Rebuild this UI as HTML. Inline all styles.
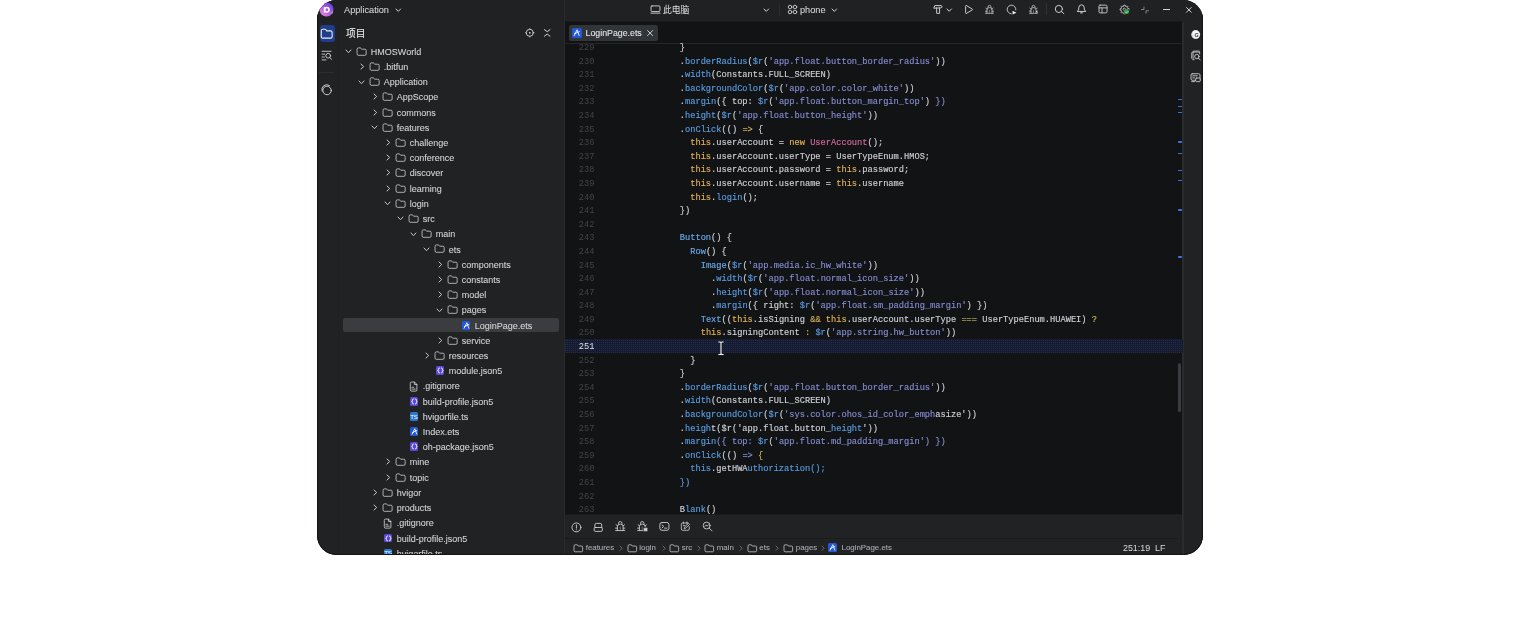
<!DOCTYPE html>
<html lang="zh"><head><meta charset="utf-8"><title>DevEco Studio</title><style>
*{box-sizing:border-box;margin:0;padding:0}
html,body{width:1520px;height:618px;background:#fff;overflow:hidden}
body{position:relative;font-family:"Liberation Sans","Noto Sans CJK SC",sans-serif;color:#d3d5d8;}
#win{position:absolute;left:317px;top:0px;width:885.6px;height:554.8px;background:#202224;border-radius:19.5px;overflow:hidden;will-change:transform}
.abs{position:absolute}
.t{position:absolute;white-space:pre;line-height:1;font-size:9.0px;transform:translateY(-50%);-webkit-text-stroke:.08px currentColor}
.code{position:absolute;white-space:pre;font-family:"Liberation Mono",monospace;font-size:8.7px;line-height:1;transform:translateY(-50%);color:#cdd0d5;-webkit-text-stroke:.15px currentColor}
.ln{position:absolute;white-space:pre;font-family:"Liberation Mono",monospace;font-size:8.7px;line-height:1;transform:translateY(-50%);color:#40444a}
svg{position:absolute;overflow:visible}
.m{color:#5a9be0} .s{color:#868bd0} .k{color:#e2b155} .p{color:#d4699e} .c{color:#6aa9ea} .o{color:#cfae58} .e{color:#a39a55}
.dot{position:absolute;height:1px;background:repeating-linear-gradient(90deg,#121416 0 1px,transparent 1px 2px)}
</style></head><body><div id="win">
<div class="abs" style="left:0;top:0;width:885.6px;height:21px;background:#1f2123"></div>
<div class="abs" style="left:0;top:21px;width:21px;height:540px;background:#202224"></div>
<div class="abs" style="left:248px;top:21px;width:618px;height:493px;background:#111315"></div>
<div class="abs" style="left:248px;top:43px;width:618px;height:1px;background:#24272a"></div>
<div class="abs" style="left:866px;top:21px;width:20px;height:540px;background:#202224"></div>
<div class="abs" style="left:248px;top:514px;width:618px;height:41px;background:#202224"></div>
<div class="dot" style="left:248px;top:514px;width:618px"></div>
<div class="dot" style="left:248px;top:538px;width:614px"></div>
<div class="abs" style="left:248px;top:21px;width:618px;height:1px;background:#1f2123"></div>
<div class="dot" style="left:248px;top:21px;width:618px"></div>
<div class="abs" style="left:247px;top:0;width:1px;height:560px;background:#27292c"></div>
<div class="abs" style="left:865.3px;top:22px;width:1.8px;height:540px;background:#292b2d"></div>
<div class="abs" style="left:21px;top:21px;width:1px;height:540px;background:#1b2021"></div>
<div class="t" style="left:27px;top:10.7px;font-size:9.2px">Application</div>
<div class="t" style="left:346px;top:10.2px;font-size:8.8px">此电脑</div>
<div class="t" style="left:483px;top:10.7px;font-size:9.2px">phone</div>
<svg style="left:79.0px;top:9.0px" width="4.6" height="2.4" viewBox="0 0 4.6 2.4"><path d="M0 0 L2.3 2.4 L4.6 0" fill="none" stroke="#cfd1d4" stroke-width="1" stroke-linecap="round" stroke-linejoin="round"/></svg>
<svg style="left:446.5px;top:8.8px" width="4.6" height="2.4" viewBox="0 0 4.6 2.4"><path d="M0 0 L2.3 2.4 L4.6 0" fill="none" stroke="#cfd1d4" stroke-width="1" stroke-linecap="round" stroke-linejoin="round"/></svg>
<svg style="left:514.7px;top:8.8px" width="4.6" height="2.4" viewBox="0 0 4.6 2.4"><path d="M0 0 L2.3 2.4 L4.6 0" fill="none" stroke="#cfd1d4" stroke-width="1" stroke-linecap="round" stroke-linejoin="round"/></svg>
<div class="abs" style="left:462px;top:4px;width:1px;height:12px;background:#2b2e31"></div>
<div class="abs" style="left:729px;top:3px;width:1px;height:12px;background:#2f3235"></div>
<svg style="left:2.3px;top:1.5px" width="15" height="15" viewBox="0 0 15 15"><defs><linearGradient id="lg" x1="0" y1="1" x2="1" y2="0"><stop offset="0" stop-color="#f49ad6"/><stop offset=".5" stop-color="#b058e6"/><stop offset="1" stop-color="#4a3be0"/></linearGradient></defs><circle cx="7.5" cy="7.5" r="7" fill="url(#lg)"/><circle cx="7.8" cy="7.8" r="2.3" fill="none" stroke="#fff" stroke-width="1.5"/><path d="M5.6 5v5.5" stroke="#fff" stroke-width="1.5" fill="none"/><path d="M11 11.5l3 0 0-3z" fill="#9a9ca0"/></svg>
<svg style="left:332.6px;top:3.8px" width="11" height="11" viewBox="0 0 16 16" stroke-width="1.35" fill="none" stroke="#cfd1d4" stroke-width="1.4" stroke-linecap="round" stroke-linejoin="round"><rect x="1.5" y="2.8" width="13" height="8.2" rx="1.3"/><path d="M1.3 13.3h13.4"/></svg>
<svg style="left:469.5px;top:4.1px" width="11" height="11" viewBox="0 0 16 16" stroke-width="1.3" fill="none" stroke="#cfd1d4" stroke-width="1.4" stroke-linecap="round" stroke-linejoin="round"><circle cx="4.4" cy="4.4" r="2.6"/><circle cx="11.6" cy="4.4" r="2.6"/><circle cx="4.4" cy="11.6" r="2.6"/><circle cx="11.6" cy="11.6" r="2.6"/></svg>
<svg style="left:614.7px;top:4.0px" width="11" height="11" viewBox="0 0 16 16"  fill="none" stroke="#cfd1d4" stroke-width="1.4" stroke-linecap="round" stroke-linejoin="round"><path d="M2.8 5.6 4 2.3h9a1.6 1.65 0 0 1 0 3.3z M6.8 5.6v8h4.2v-8"/></svg>
<svg style="left:630.4px;top:8.55px" width="4.4" height="2.3" viewBox="0 0 4.4 2.3"><path d="M0 0 L2.2 2.3 L4.4 0" fill="none" stroke="#cfd1d4" stroke-width="1" stroke-linecap="round" stroke-linejoin="round"/></svg>
<svg style="left:645.8px;top:4.0px" width="11" height="11" viewBox="0 0 16 16"  fill="none" stroke="#cfd1d4" stroke-width="1.4" stroke-linecap="round" stroke-linejoin="round"><path d="M3.8 2.8a.7.7 0 0 1 1.1-.6l8.6 5.2a.7.7 0 0 1 0 1.2l-8.6 5.2a.7.7 0 0 1-1.1-.6z"/></svg>
<svg style="left:667.4px;top:4.0px" width="11" height="11" viewBox="0 0 16 16"  fill="none" stroke="#cfd1d4" stroke-width="1.4" stroke-linecap="round" stroke-linejoin="round"><g stroke-width="1.1"><path d="M5.8 5.2V4.3a2.2 2.4 0 0 1 4.4 0v.9"/><path d="M4.3 13.4V8.8a3.7 3.6 0 0 1 7.4 0v4.6"/><path d="M2.2 13.5h11.6 M4.4 7.5 2.6 6.1 M11.6 7.5 13.4 6.1 M4.3 10.4H2 M11.7 10.4H14"/><path d="M8 9v3" stroke-opacity=".6"/></g></svg>
<svg style="left:689.3px;top:4.0px" width="11" height="11" viewBox="0 0 16 16"  fill="none" stroke="#cfd1d4" stroke-width="1.4" stroke-linecap="round" stroke-linejoin="round"><path d="M14.3 8.6A6.3 6.3 0 1 0 7.6 14.3" stroke-width="1.3"/><path d="M9.5 9.8 15.2 12.6 9.5 15.4Z" fill="#eceef0" stroke="none"/></svg>
<svg style="left:710.9px;top:4.0px" width="11" height="11" viewBox="0 0 16 16"  fill="none" stroke="#cfd1d4" stroke-width="1.4" stroke-linecap="round" stroke-linejoin="round"><g stroke-width="1.1"><path d="M5.8 5.2V4.3a2.2 2.4 0 0 1 4.4 0v.9"/><path d="M4.3 13.4V8.8a3.7 3.6 0 0 1 7.4 0v4.6"/><path d="M2.2 13.5h11.6 M4.4 7.5 2.6 6.1 M11.6 7.5 13.4 6.1 M4.3 10.4H2 M11.7 10.4H14"/><path d="M8 9v3" stroke-opacity=".6"/></g><path d="M11.8 8.5 15.2 13.3 11.3 12.3Z" fill="#e8eaec" stroke="#1f2123" stroke-width=".6"/></svg>
<svg style="left:736.8px;top:4.0px" width="11" height="11" viewBox="0 0 16 16"  fill="none" stroke="#cfd1d4" stroke-width="1.4" stroke-linecap="round" stroke-linejoin="round"><circle cx="7.1" cy="7.2" r="5.2"/><path d="M10.9 11 14.3 14.1"/></svg>
<svg style="left:758.7px;top:3.2px" width="11" height="11" viewBox="0 0 16 16"  fill="none" stroke="#cfd1d4" stroke-width="1.4" stroke-linecap="round" stroke-linejoin="round"><path d="M2.2 12c1.5-1 1.8-2.4 1.8-5a4 4.3 0 0 1 8 0c0 2.6 .3 4 1.8 5z M6.5 14.3h3"/></svg>
<svg style="left:780.7px;top:4.4px" width="10" height="10" viewBox="0 0 16 16"  fill="none" stroke="#cfd1d4" stroke-width="1.4" stroke-linecap="round" stroke-linejoin="round"><rect x="1.6" y="1.8" width="12.8" height="12.4" rx="1.8"/><path d="M1.6 6.2h12.8 M6.4 6.2v8"/></svg>
<svg style="left:801.8px;top:3.5px" width="11" height="11" viewBox="0 0 16 16"  fill="none" stroke="#cfd1d4" stroke-width="1.4" stroke-linecap="round" stroke-linejoin="round"><path d="M14.42 6.98 L14.42 9.02 L12.76 9.14 L12.18 10.56 L13.26 11.82 L11.82 13.26 L10.56 12.18 L9.14 12.76 L9.02 14.42 L6.98 14.42 L6.86 12.76 L5.44 12.18 L4.18 13.26 L2.74 11.82 L3.82 10.56 L3.24 9.14 L1.58 9.02 L1.58 6.98 L3.24 6.86 L3.82 5.44 L2.74 4.18 L4.18 2.74 L5.44 3.82 L6.86 3.24 L6.98 1.58 L9.02 1.58 L9.14 3.24 L10.56 3.82 L11.82 2.74 L13.26 4.18 L12.18 5.44 L12.76 6.86Z" stroke-width="1.2"/><circle cx="8" cy="8" r="1.9" stroke-width="1.2"/></svg>
<div class="abs" style="left:807.4px;top:9.3px;width:5px;height:5px;border-radius:50%;background:#3fa24b;box-shadow:0 0 0 .5px #1f2123"></div>
<svg style="left:808.3px;top:10.5px" width="3.2" height="2.6" viewBox="0 0 3.2 2.6"><path d="M.3 1.3 1.2 2.2 2.9.4" fill="none" stroke="#e6f5e8" stroke-width=".6"/></svg>
<svg style="left:824.0px;top:5.7px" width="8" height="8" viewBox="0 0 16 16" stroke-width="1.3" stroke="#b4b6ba" fill="none" stroke="#cfd1d4" stroke-width="1.4" stroke-linecap="round" stroke-linejoin="round"><path d="M1 7h5V2 M15 9.5h-5v5"/></svg>
<div class="abs" style="left:846px;top:9.2px;width:7.2px;height:1px;background:#cfd1d4"></div>
<svg style="left:868.5px;top:6.6px" width="5.8" height="5.8" viewBox="0 0 16 16" stroke-width="2.5" stroke="#e4e6e9" fill="none" stroke="#cfd1d4" stroke-width="1.4" stroke-linecap="round" stroke-linejoin="round"><path d="M1.5 1.5 14.5 14.5 M14.5 1.5 1.5 14.5"/></svg>
<div class="abs" style="left:3.3px;top:24.9px;width:14.8px;height:17.1px;border-radius:3px;background:#1f3d8c"></div>
<svg style="left:3.2px;top:27.1px" width="13.4" height="13.4" viewBox="0 0 16 16" stroke="#eef0f3" stroke-width="1.3" fill="none" stroke="#cfd1d4" stroke-width="1.4" stroke-linecap="round" stroke-linejoin="round"><path d="M1.5 4.4a1.7 1.7 0 0 1 1.7-1.7h2.8q.7 0 1.1.6l.9 1.3H12.8a1.7 1.7 0 0 1 1.7 1.7v5.3a1.7 1.7 0 0 1-1.7 1.7H3.2a1.7 1.7 0 0 1-1.7-1.7z"/></svg>
<svg style="left:3.65px;top:49.95px" width="11.5" height="11.5" viewBox="0 0 16 16" stroke-width="1.25" fill="none" stroke="#cfd1d4" stroke-width="1.4" stroke-linecap="round" stroke-linejoin="round"><path d="M1.5 1.8h12.5 M1.5 5.8h3.6 M1.5 9.8h3 M1.5 13.8h5.5"/><circle cx="10" cy="8" r="3.3"/><path d="M12.5 10.6 14.5 13"/></svg>
<div class="abs" style="left:2px;top:72.3px;width:15px;height:1px;background:#2c2f32"></div>
<svg style="left:2.9px;top:82.8px" width="13" height="13" viewBox="0 0 16 16" stroke-width="1.2" fill="none" stroke="#cfd1d4" stroke-width="1.4" stroke-linecap="round" stroke-linejoin="round"><circle cx="8.7" cy="9.2" r="5.2"/><path d="M2.6 10A6 6 0 0 1 11.5 3"/></svg>
<div class="t" style="left:29px;top:34.2px;font-size:9.7px;color:#eceef0">项目</div>
<svg style="left:207.7px;top:28.0px" width="9.6" height="9.6" viewBox="0 0 16 16" stroke-width="1.5" fill="none" stroke="#cfd1d4" stroke-width="1.4" stroke-linecap="round" stroke-linejoin="round"><circle cx="8" cy="8" r="5.9"/><circle cx="8" cy="8" r="1.5" fill="#cfd1d4" stroke="none"/><path d="M8 .8v1.6 M8 13.6v1.6 M.8 8h1.6 M13.6 8h1.6" stroke-width="1.2"/></svg>
<svg style="left:226.8px;top:29.1px" width="6.4" height="7.8" viewBox="0 0 6.4 7.8" fill="none" stroke="#cfd1d4" stroke-width="1" stroke-linecap="round" stroke-linejoin="round"><path d="M.4 .6 3.2 2.7 6 .6 M.4 7.2 3.2 5.1 6 7.2"/></svg>
<svg style="left:29.2px;top:50.15px" width="5" height="2.7" viewBox="0 0 5 2.7"><path d="M0 0 L2.5 2.7 L5 0" fill="none" stroke="#c6c8cb" stroke-width="1" stroke-linecap="round" stroke-linejoin="round"/></svg>
<svg style="left:38.9px;top:45.75px" width="11.2" height="11.2" viewBox="0 0 16 16" stroke-width="1.15" fill="none" stroke="#cfd1d4" stroke-width="1.4" stroke-linecap="round" stroke-linejoin="round"><path d="M1.5 4.4a1.7 1.7 0 0 1 1.7-1.7h2.8q.7 0 1.1.6l.9 1.3H12.8a1.7 1.7 0 0 1 1.7 1.7v5.3a1.7 1.7 0 0 1-1.7 1.7H3.2a1.7 1.7 0 0 1-1.7-1.7z"/></svg>
<div class="t" style="left:53.8px;top:51.8px">HMOSWorld</div>
<svg style="left:44.25px;top:64.01px" width="2.7" height="5" viewBox="0 0 2.7 5"><path d="M0 0 L2.7 2.5 L0 5" fill="none" stroke="#c6c8cb" stroke-width="1" stroke-linecap="round" stroke-linejoin="round"/></svg>
<svg style="left:51.9px;top:60.96px" width="11.2" height="11.2" viewBox="0 0 16 16" stroke-width="1.15" fill="none" stroke="#cfd1d4" stroke-width="1.4" stroke-linecap="round" stroke-linejoin="round"><path d="M1.5 4.4a1.7 1.7 0 0 1 1.7-1.7h2.8q.7 0 1.1.6l.9 1.3H12.8a1.7 1.7 0 0 1 1.7 1.7v5.3a1.7 1.7 0 0 1-1.7 1.7H3.2a1.7 1.7 0 0 1-1.7-1.7z"/></svg>
<div class="t" style="left:66.8px;top:67.01px">.bitfun</div>
<svg style="left:42.2px;top:80.57px" width="5" height="2.7" viewBox="0 0 5 2.7"><path d="M0 0 L2.5 2.7 L5 0" fill="none" stroke="#c6c8cb" stroke-width="1" stroke-linecap="round" stroke-linejoin="round"/></svg>
<svg style="left:51.9px;top:76.17px" width="11.2" height="11.2" viewBox="0 0 16 16" stroke-width="1.15" fill="none" stroke="#cfd1d4" stroke-width="1.4" stroke-linecap="round" stroke-linejoin="round"><path d="M1.5 4.4a1.7 1.7 0 0 1 1.7-1.7h2.8q.7 0 1.1.6l.9 1.3H12.8a1.7 1.7 0 0 1 1.7 1.7v5.3a1.7 1.7 0 0 1-1.7 1.7H3.2a1.7 1.7 0 0 1-1.7-1.7z"/></svg>
<div class="t" style="left:66.8px;top:82.22px">Application</div>
<svg style="left:57.25px;top:94.43px" width="2.7" height="5" viewBox="0 0 2.7 5"><path d="M0 0 L2.7 2.5 L0 5" fill="none" stroke="#c6c8cb" stroke-width="1" stroke-linecap="round" stroke-linejoin="round"/></svg>
<svg style="left:64.9px;top:91.38px" width="11.2" height="11.2" viewBox="0 0 16 16" stroke-width="1.15" fill="none" stroke="#cfd1d4" stroke-width="1.4" stroke-linecap="round" stroke-linejoin="round"><path d="M1.5 4.4a1.7 1.7 0 0 1 1.7-1.7h2.8q.7 0 1.1.6l.9 1.3H12.8a1.7 1.7 0 0 1 1.7 1.7v5.3a1.7 1.7 0 0 1-1.7 1.7H3.2a1.7 1.7 0 0 1-1.7-1.7z"/></svg>
<div class="t" style="left:79.8px;top:97.43px">AppScope</div>
<svg style="left:57.25px;top:109.64px" width="2.7" height="5" viewBox="0 0 2.7 5"><path d="M0 0 L2.7 2.5 L0 5" fill="none" stroke="#c6c8cb" stroke-width="1" stroke-linecap="round" stroke-linejoin="round"/></svg>
<svg style="left:64.9px;top:106.59px" width="11.2" height="11.2" viewBox="0 0 16 16" stroke-width="1.15" fill="none" stroke="#cfd1d4" stroke-width="1.4" stroke-linecap="round" stroke-linejoin="round"><path d="M1.5 4.4a1.7 1.7 0 0 1 1.7-1.7h2.8q.7 0 1.1.6l.9 1.3H12.8a1.7 1.7 0 0 1 1.7 1.7v5.3a1.7 1.7 0 0 1-1.7 1.7H3.2a1.7 1.7 0 0 1-1.7-1.7z"/></svg>
<div class="t" style="left:79.8px;top:112.64px">commons</div>
<svg style="left:55.2px;top:126.2px" width="5" height="2.7" viewBox="0 0 5 2.7"><path d="M0 0 L2.5 2.7 L5 0" fill="none" stroke="#c6c8cb" stroke-width="1" stroke-linecap="round" stroke-linejoin="round"/></svg>
<svg style="left:64.9px;top:121.8px" width="11.2" height="11.2" viewBox="0 0 16 16" stroke-width="1.15" fill="none" stroke="#cfd1d4" stroke-width="1.4" stroke-linecap="round" stroke-linejoin="round"><path d="M1.5 4.4a1.7 1.7 0 0 1 1.7-1.7h2.8q.7 0 1.1.6l.9 1.3H12.8a1.7 1.7 0 0 1 1.7 1.7v5.3a1.7 1.7 0 0 1-1.7 1.7H3.2a1.7 1.7 0 0 1-1.7-1.7z"/></svg>
<div class="t" style="left:79.8px;top:127.85px">features</div>
<svg style="left:70.25px;top:140.06px" width="2.7" height="5" viewBox="0 0 2.7 5"><path d="M0 0 L2.7 2.5 L0 5" fill="none" stroke="#c6c8cb" stroke-width="1" stroke-linecap="round" stroke-linejoin="round"/></svg>
<svg style="left:77.9px;top:137.01px" width="11.2" height="11.2" viewBox="0 0 16 16" stroke-width="1.15" fill="none" stroke="#cfd1d4" stroke-width="1.4" stroke-linecap="round" stroke-linejoin="round"><path d="M1.5 4.4a1.7 1.7 0 0 1 1.7-1.7h2.8q.7 0 1.1.6l.9 1.3H12.8a1.7 1.7 0 0 1 1.7 1.7v5.3a1.7 1.7 0 0 1-1.7 1.7H3.2a1.7 1.7 0 0 1-1.7-1.7z"/></svg>
<div class="t" style="left:92.8px;top:143.06px">challenge</div>
<svg style="left:70.25px;top:155.27px" width="2.7" height="5" viewBox="0 0 2.7 5"><path d="M0 0 L2.7 2.5 L0 5" fill="none" stroke="#c6c8cb" stroke-width="1" stroke-linecap="round" stroke-linejoin="round"/></svg>
<svg style="left:77.9px;top:152.22px" width="11.2" height="11.2" viewBox="0 0 16 16" stroke-width="1.15" fill="none" stroke="#cfd1d4" stroke-width="1.4" stroke-linecap="round" stroke-linejoin="round"><path d="M1.5 4.4a1.7 1.7 0 0 1 1.7-1.7h2.8q.7 0 1.1.6l.9 1.3H12.8a1.7 1.7 0 0 1 1.7 1.7v5.3a1.7 1.7 0 0 1-1.7 1.7H3.2a1.7 1.7 0 0 1-1.7-1.7z"/></svg>
<div class="t" style="left:92.8px;top:158.27px">conference</div>
<svg style="left:70.25px;top:170.48px" width="2.7" height="5" viewBox="0 0 2.7 5"><path d="M0 0 L2.7 2.5 L0 5" fill="none" stroke="#c6c8cb" stroke-width="1" stroke-linecap="round" stroke-linejoin="round"/></svg>
<svg style="left:77.9px;top:167.43px" width="11.2" height="11.2" viewBox="0 0 16 16" stroke-width="1.15" fill="none" stroke="#cfd1d4" stroke-width="1.4" stroke-linecap="round" stroke-linejoin="round"><path d="M1.5 4.4a1.7 1.7 0 0 1 1.7-1.7h2.8q.7 0 1.1.6l.9 1.3H12.8a1.7 1.7 0 0 1 1.7 1.7v5.3a1.7 1.7 0 0 1-1.7 1.7H3.2a1.7 1.7 0 0 1-1.7-1.7z"/></svg>
<div class="t" style="left:92.8px;top:173.48px">discover</div>
<svg style="left:70.25px;top:185.69px" width="2.7" height="5" viewBox="0 0 2.7 5"><path d="M0 0 L2.7 2.5 L0 5" fill="none" stroke="#c6c8cb" stroke-width="1" stroke-linecap="round" stroke-linejoin="round"/></svg>
<svg style="left:77.9px;top:182.64px" width="11.2" height="11.2" viewBox="0 0 16 16" stroke-width="1.15" fill="none" stroke="#cfd1d4" stroke-width="1.4" stroke-linecap="round" stroke-linejoin="round"><path d="M1.5 4.4a1.7 1.7 0 0 1 1.7-1.7h2.8q.7 0 1.1.6l.9 1.3H12.8a1.7 1.7 0 0 1 1.7 1.7v5.3a1.7 1.7 0 0 1-1.7 1.7H3.2a1.7 1.7 0 0 1-1.7-1.7z"/></svg>
<div class="t" style="left:92.8px;top:188.69px">learning</div>
<svg style="left:68.2px;top:202.25px" width="5" height="2.7" viewBox="0 0 5 2.7"><path d="M0 0 L2.5 2.7 L5 0" fill="none" stroke="#c6c8cb" stroke-width="1" stroke-linecap="round" stroke-linejoin="round"/></svg>
<svg style="left:77.9px;top:197.85px" width="11.2" height="11.2" viewBox="0 0 16 16" stroke-width="1.15" fill="none" stroke="#cfd1d4" stroke-width="1.4" stroke-linecap="round" stroke-linejoin="round"><path d="M1.5 4.4a1.7 1.7 0 0 1 1.7-1.7h2.8q.7 0 1.1.6l.9 1.3H12.8a1.7 1.7 0 0 1 1.7 1.7v5.3a1.7 1.7 0 0 1-1.7 1.7H3.2a1.7 1.7 0 0 1-1.7-1.7z"/></svg>
<div class="t" style="left:92.8px;top:203.9px">login</div>
<svg style="left:81.2px;top:217.46px" width="5" height="2.7" viewBox="0 0 5 2.7"><path d="M0 0 L2.5 2.7 L5 0" fill="none" stroke="#c6c8cb" stroke-width="1" stroke-linecap="round" stroke-linejoin="round"/></svg>
<svg style="left:90.9px;top:213.06px" width="11.2" height="11.2" viewBox="0 0 16 16" stroke-width="1.15" fill="none" stroke="#cfd1d4" stroke-width="1.4" stroke-linecap="round" stroke-linejoin="round"><path d="M1.5 4.4a1.7 1.7 0 0 1 1.7-1.7h2.8q.7 0 1.1.6l.9 1.3H12.8a1.7 1.7 0 0 1 1.7 1.7v5.3a1.7 1.7 0 0 1-1.7 1.7H3.2a1.7 1.7 0 0 1-1.7-1.7z"/></svg>
<div class="t" style="left:105.8px;top:219.11px">src</div>
<svg style="left:94.2px;top:232.67px" width="5" height="2.7" viewBox="0 0 5 2.7"><path d="M0 0 L2.5 2.7 L5 0" fill="none" stroke="#c6c8cb" stroke-width="1" stroke-linecap="round" stroke-linejoin="round"/></svg>
<svg style="left:103.9px;top:228.27px" width="11.2" height="11.2" viewBox="0 0 16 16" stroke-width="1.15" fill="none" stroke="#cfd1d4" stroke-width="1.4" stroke-linecap="round" stroke-linejoin="round"><path d="M1.5 4.4a1.7 1.7 0 0 1 1.7-1.7h2.8q.7 0 1.1.6l.9 1.3H12.8a1.7 1.7 0 0 1 1.7 1.7v5.3a1.7 1.7 0 0 1-1.7 1.7H3.2a1.7 1.7 0 0 1-1.7-1.7z"/></svg>
<div class="t" style="left:118.8px;top:234.32px">main</div>
<svg style="left:107.2px;top:247.88px" width="5" height="2.7" viewBox="0 0 5 2.7"><path d="M0 0 L2.5 2.7 L5 0" fill="none" stroke="#c6c8cb" stroke-width="1" stroke-linecap="round" stroke-linejoin="round"/></svg>
<svg style="left:116.9px;top:243.48px" width="11.2" height="11.2" viewBox="0 0 16 16" stroke-width="1.15" fill="none" stroke="#cfd1d4" stroke-width="1.4" stroke-linecap="round" stroke-linejoin="round"><path d="M1.5 4.4a1.7 1.7 0 0 1 1.7-1.7h2.8q.7 0 1.1.6l.9 1.3H12.8a1.7 1.7 0 0 1 1.7 1.7v5.3a1.7 1.7 0 0 1-1.7 1.7H3.2a1.7 1.7 0 0 1-1.7-1.7z"/></svg>
<div class="t" style="left:131.8px;top:249.53px">ets</div>
<svg style="left:122.25px;top:261.74px" width="2.7" height="5" viewBox="0 0 2.7 5"><path d="M0 0 L2.7 2.5 L0 5" fill="none" stroke="#c6c8cb" stroke-width="1" stroke-linecap="round" stroke-linejoin="round"/></svg>
<svg style="left:129.9px;top:258.69px" width="11.2" height="11.2" viewBox="0 0 16 16" stroke-width="1.15" fill="none" stroke="#cfd1d4" stroke-width="1.4" stroke-linecap="round" stroke-linejoin="round"><path d="M1.5 4.4a1.7 1.7 0 0 1 1.7-1.7h2.8q.7 0 1.1.6l.9 1.3H12.8a1.7 1.7 0 0 1 1.7 1.7v5.3a1.7 1.7 0 0 1-1.7 1.7H3.2a1.7 1.7 0 0 1-1.7-1.7z"/></svg>
<div class="t" style="left:144.8px;top:264.74px">components</div>
<svg style="left:122.25px;top:276.95px" width="2.7" height="5" viewBox="0 0 2.7 5"><path d="M0 0 L2.7 2.5 L0 5" fill="none" stroke="#c6c8cb" stroke-width="1" stroke-linecap="round" stroke-linejoin="round"/></svg>
<svg style="left:129.9px;top:273.9px" width="11.2" height="11.2" viewBox="0 0 16 16" stroke-width="1.15" fill="none" stroke="#cfd1d4" stroke-width="1.4" stroke-linecap="round" stroke-linejoin="round"><path d="M1.5 4.4a1.7 1.7 0 0 1 1.7-1.7h2.8q.7 0 1.1.6l.9 1.3H12.8a1.7 1.7 0 0 1 1.7 1.7v5.3a1.7 1.7 0 0 1-1.7 1.7H3.2a1.7 1.7 0 0 1-1.7-1.7z"/></svg>
<div class="t" style="left:144.8px;top:279.95px">constants</div>
<svg style="left:122.25px;top:292.16px" width="2.7" height="5" viewBox="0 0 2.7 5"><path d="M0 0 L2.7 2.5 L0 5" fill="none" stroke="#c6c8cb" stroke-width="1" stroke-linecap="round" stroke-linejoin="round"/></svg>
<svg style="left:129.9px;top:289.11px" width="11.2" height="11.2" viewBox="0 0 16 16" stroke-width="1.15" fill="none" stroke="#cfd1d4" stroke-width="1.4" stroke-linecap="round" stroke-linejoin="round"><path d="M1.5 4.4a1.7 1.7 0 0 1 1.7-1.7h2.8q.7 0 1.1.6l.9 1.3H12.8a1.7 1.7 0 0 1 1.7 1.7v5.3a1.7 1.7 0 0 1-1.7 1.7H3.2a1.7 1.7 0 0 1-1.7-1.7z"/></svg>
<div class="t" style="left:144.8px;top:295.16px">model</div>
<svg style="left:120.2px;top:308.72px" width="5" height="2.7" viewBox="0 0 5 2.7"><path d="M0 0 L2.5 2.7 L5 0" fill="none" stroke="#c6c8cb" stroke-width="1" stroke-linecap="round" stroke-linejoin="round"/></svg>
<svg style="left:129.9px;top:304.32px" width="11.2" height="11.2" viewBox="0 0 16 16" stroke-width="1.15" fill="none" stroke="#cfd1d4" stroke-width="1.4" stroke-linecap="round" stroke-linejoin="round"><path d="M1.5 4.4a1.7 1.7 0 0 1 1.7-1.7h2.8q.7 0 1.1.6l.9 1.3H12.8a1.7 1.7 0 0 1 1.7 1.7v5.3a1.7 1.7 0 0 1-1.7 1.7H3.2a1.7 1.7 0 0 1-1.7-1.7z"/></svg>
<div class="t" style="left:144.8px;top:310.37px">pages</div>
<div class="abs" style="left:26px;top:317.68px;width:216px;height:14.8px;border-radius:2.5px;background:#3a3c3f"></div>
<div class="abs" style="left:144.55px;top:320.63px;width:8.9px;height:8.9px;border-radius:1.6px;background:#2257d8"></div><svg style="left:144.55px;top:320.63px" width="8.9" height="8.9" viewBox="0 0 10 10" fill="none" stroke="#fff" stroke-width=".95" stroke-linecap="round" stroke-linejoin="round"><path d="M2.4 8.1 5.4 1.9 7.7 8.1 M2.6 6.3 7.9 3.9"/></svg>
<div class="t" style="left:157.8px;top:325.58px">LoginPage.ets</div>
<svg style="left:122.25px;top:337.79px" width="2.7" height="5" viewBox="0 0 2.7 5"><path d="M0 0 L2.7 2.5 L0 5" fill="none" stroke="#c6c8cb" stroke-width="1" stroke-linecap="round" stroke-linejoin="round"/></svg>
<svg style="left:129.9px;top:334.74px" width="11.2" height="11.2" viewBox="0 0 16 16" stroke-width="1.15" fill="none" stroke="#cfd1d4" stroke-width="1.4" stroke-linecap="round" stroke-linejoin="round"><path d="M1.5 4.4a1.7 1.7 0 0 1 1.7-1.7h2.8q.7 0 1.1.6l.9 1.3H12.8a1.7 1.7 0 0 1 1.7 1.7v5.3a1.7 1.7 0 0 1-1.7 1.7H3.2a1.7 1.7 0 0 1-1.7-1.7z"/></svg>
<div class="t" style="left:144.8px;top:340.79px">service</div>
<svg style="left:109.25px;top:353.0px" width="2.7" height="5" viewBox="0 0 2.7 5"><path d="M0 0 L2.7 2.5 L0 5" fill="none" stroke="#c6c8cb" stroke-width="1" stroke-linecap="round" stroke-linejoin="round"/></svg>
<svg style="left:116.9px;top:349.95px" width="11.2" height="11.2" viewBox="0 0 16 16" stroke-width="1.15" fill="none" stroke="#cfd1d4" stroke-width="1.4" stroke-linecap="round" stroke-linejoin="round"><path d="M1.5 4.4a1.7 1.7 0 0 1 1.7-1.7h2.8q.7 0 1.1.6l.9 1.3H12.8a1.7 1.7 0 0 1 1.7 1.7v5.3a1.7 1.7 0 0 1-1.7 1.7H3.2a1.7 1.7 0 0 1-1.7-1.7z"/></svg>
<div class="t" style="left:131.8px;top:356.0px">resources</div>
<div class="abs" style="left:118.55px;top:366.26px;width:8.9px;height:8.9px;border-radius:1.6px;background:#5a48d8"></div><svg style="left:118.55px;top:366.26px" width="8.9" height="8.9" viewBox="0 0 10 10" fill="none" stroke="#fff" stroke-width="1" stroke-linecap="round" stroke-linejoin="round"><path d="M3.9 2.2q-1.2 0-1.2 1.2v.8q0 .8-.8.8q.8 0 .8.8v.8q0 1.2 1.2 1.2 M6.1 2.2q1.2 0 1.2 1.2v.8q0 .8.8.8q-.8 0-.8.8v.8q0 1.2-1.2 1.2"/></svg>
<div class="t" style="left:131.8px;top:371.21px">module.json5</div>
<svg style="left:91.2px;top:380.62px" width="11.2" height="11.2" viewBox="0 0 16 16" stroke-width="1.2" fill="none" stroke="#cfd1d4" stroke-width="1.4" stroke-linecap="round" stroke-linejoin="round"><path d="M3.3 3a1.5 1.5 0 0 1 1.5-1.5h4.5l3.4 3.4v8.1a1.5 1.5 0 0 1-1.5 1.5h-6.4a1.5 1.5 0 0 1-1.5-1.5z M9.2 1.7v3.3h3.3 M5.6 9h2.6 M5.6 11.6h4.8"/></svg>
<div class="t" style="left:105.8px;top:386.42px">.gitignore</div>
<div class="abs" style="left:92.55px;top:396.68px;width:8.9px;height:8.9px;border-radius:1.6px;background:#5a48d8"></div><svg style="left:92.55px;top:396.68px" width="8.9" height="8.9" viewBox="0 0 10 10" fill="none" stroke="#fff" stroke-width="1" stroke-linecap="round" stroke-linejoin="round"><path d="M3.9 2.2q-1.2 0-1.2 1.2v.8q0 .8-.8.8q.8 0 .8.8v.8q0 1.2 1.2 1.2 M6.1 2.2q1.2 0 1.2 1.2v.8q0 .8.8.8q-.8 0-.8.8v.8q0 1.2-1.2 1.2"/></svg>
<div class="t" style="left:105.8px;top:401.63px">build-profile.json5</div>
<div class="abs" style="left:92.55px;top:411.89px;width:8.9px;height:8.9px;border-radius:1.6px;background:#2a78d2"></div><div class="t" style="left:92.55px;top:416.53999999999996px;width:8.9px;text-align:center;font-size:6.2px;font-weight:400;color:#fff;letter-spacing:-.3px;-webkit-text-stroke:0">TS</div>
<div class="t" style="left:105.8px;top:416.84px">hvigorfile.ts</div>
<div class="abs" style="left:92.55px;top:427.1px;width:8.9px;height:8.9px;border-radius:1.6px;background:#2257d8"></div><svg style="left:92.55px;top:427.1px" width="8.9" height="8.9" viewBox="0 0 10 10" fill="none" stroke="#fff" stroke-width=".95" stroke-linecap="round" stroke-linejoin="round"><path d="M2.4 8.1 5.4 1.9 7.7 8.1 M2.6 6.3 7.9 3.9"/></svg>
<div class="t" style="left:105.8px;top:432.05px">Index.ets</div>
<div class="abs" style="left:92.55px;top:442.31px;width:8.9px;height:8.9px;border-radius:1.6px;background:#5a48d8"></div><svg style="left:92.55px;top:442.31px" width="8.9" height="8.9" viewBox="0 0 10 10" fill="none" stroke="#fff" stroke-width="1" stroke-linecap="round" stroke-linejoin="round"><path d="M3.9 2.2q-1.2 0-1.2 1.2v.8q0 .8-.8.8q.8 0 .8.8v.8q0 1.2 1.2 1.2 M6.1 2.2q1.2 0 1.2 1.2v.8q0 .8.8.8q-.8 0-.8.8v.8q0 1.2-1.2 1.2"/></svg>
<div class="t" style="left:105.8px;top:447.26px">oh-package.json5</div>
<svg style="left:70.25px;top:459.47px" width="2.7" height="5" viewBox="0 0 2.7 5"><path d="M0 0 L2.7 2.5 L0 5" fill="none" stroke="#c6c8cb" stroke-width="1" stroke-linecap="round" stroke-linejoin="round"/></svg>
<svg style="left:77.9px;top:456.42px" width="11.2" height="11.2" viewBox="0 0 16 16" stroke-width="1.15" fill="none" stroke="#cfd1d4" stroke-width="1.4" stroke-linecap="round" stroke-linejoin="round"><path d="M1.5 4.4a1.7 1.7 0 0 1 1.7-1.7h2.8q.7 0 1.1.6l.9 1.3H12.8a1.7 1.7 0 0 1 1.7 1.7v5.3a1.7 1.7 0 0 1-1.7 1.7H3.2a1.7 1.7 0 0 1-1.7-1.7z"/></svg>
<div class="t" style="left:92.8px;top:462.47px">mine</div>
<svg style="left:70.25px;top:474.68px" width="2.7" height="5" viewBox="0 0 2.7 5"><path d="M0 0 L2.7 2.5 L0 5" fill="none" stroke="#c6c8cb" stroke-width="1" stroke-linecap="round" stroke-linejoin="round"/></svg>
<svg style="left:77.9px;top:471.63px" width="11.2" height="11.2" viewBox="0 0 16 16" stroke-width="1.15" fill="none" stroke="#cfd1d4" stroke-width="1.4" stroke-linecap="round" stroke-linejoin="round"><path d="M1.5 4.4a1.7 1.7 0 0 1 1.7-1.7h2.8q.7 0 1.1.6l.9 1.3H12.8a1.7 1.7 0 0 1 1.7 1.7v5.3a1.7 1.7 0 0 1-1.7 1.7H3.2a1.7 1.7 0 0 1-1.7-1.7z"/></svg>
<div class="t" style="left:92.8px;top:477.68px">topic</div>
<svg style="left:57.25px;top:489.89px" width="2.7" height="5" viewBox="0 0 2.7 5"><path d="M0 0 L2.7 2.5 L0 5" fill="none" stroke="#c6c8cb" stroke-width="1" stroke-linecap="round" stroke-linejoin="round"/></svg>
<svg style="left:64.9px;top:486.84px" width="11.2" height="11.2" viewBox="0 0 16 16" stroke-width="1.15" fill="none" stroke="#cfd1d4" stroke-width="1.4" stroke-linecap="round" stroke-linejoin="round"><path d="M1.5 4.4a1.7 1.7 0 0 1 1.7-1.7h2.8q.7 0 1.1.6l.9 1.3H12.8a1.7 1.7 0 0 1 1.7 1.7v5.3a1.7 1.7 0 0 1-1.7 1.7H3.2a1.7 1.7 0 0 1-1.7-1.7z"/></svg>
<div class="t" style="left:79.8px;top:492.89px">hvigor</div>
<svg style="left:57.25px;top:505.1px" width="2.7" height="5" viewBox="0 0 2.7 5"><path d="M0 0 L2.7 2.5 L0 5" fill="none" stroke="#c6c8cb" stroke-width="1" stroke-linecap="round" stroke-linejoin="round"/></svg>
<svg style="left:64.9px;top:502.05px" width="11.2" height="11.2" viewBox="0 0 16 16" stroke-width="1.15" fill="none" stroke="#cfd1d4" stroke-width="1.4" stroke-linecap="round" stroke-linejoin="round"><path d="M1.5 4.4a1.7 1.7 0 0 1 1.7-1.7h2.8q.7 0 1.1.6l.9 1.3H12.8a1.7 1.7 0 0 1 1.7 1.7v5.3a1.7 1.7 0 0 1-1.7 1.7H3.2a1.7 1.7 0 0 1-1.7-1.7z"/></svg>
<div class="t" style="left:79.8px;top:508.1px">products</div>
<svg style="left:65.2px;top:517.51px" width="11.2" height="11.2" viewBox="0 0 16 16" stroke-width="1.2" fill="none" stroke="#cfd1d4" stroke-width="1.4" stroke-linecap="round" stroke-linejoin="round"><path d="M3.3 3a1.5 1.5 0 0 1 1.5-1.5h4.5l3.4 3.4v8.1a1.5 1.5 0 0 1-1.5 1.5h-6.4a1.5 1.5 0 0 1-1.5-1.5z M9.2 1.7v3.3h3.3 M5.6 9h2.6 M5.6 11.6h4.8"/></svg>
<div class="t" style="left:79.8px;top:523.31px">.gitignore</div>
<div class="abs" style="left:66.55px;top:533.57px;width:8.9px;height:8.9px;border-radius:1.6px;background:#5a48d8"></div><svg style="left:66.55px;top:533.57px" width="8.9" height="8.9" viewBox="0 0 10 10" fill="none" stroke="#fff" stroke-width="1" stroke-linecap="round" stroke-linejoin="round"><path d="M3.9 2.2q-1.2 0-1.2 1.2v.8q0 .8-.8.8q.8 0 .8.8v.8q0 1.2 1.2 1.2 M6.1 2.2q1.2 0 1.2 1.2v.8q0 .8.8.8q-.8 0-.8.8v.8q0 1.2-1.2 1.2"/></svg>
<div class="t" style="left:79.8px;top:538.52px">build-profile.json5</div>
<div class="abs" style="left:66.55px;top:548.78px;width:8.9px;height:8.9px;border-radius:1.6px;background:#2a78d2"></div><div class="t" style="left:66.55px;top:553.4300000000001px;width:8.9px;text-align:center;font-size:6.2px;font-weight:400;color:#fff;letter-spacing:-.3px;-webkit-text-stroke:0">TS</div>
<div class="t" style="left:79.8px;top:553.73px">hvigorfile.ts</div>
<div class="abs" style="left:252.2px;top:25.1px;width:88.6px;height:15.5px;border-radius:2.5px;background:#323538"></div>
<div class="abs" style="left:255.25px;top:28.25px;width:9.3px;height:9.3px;border-radius:1.6px;background:#2257d8"></div><svg style="left:255.25px;top:28.25px" width="9.3" height="9.3" viewBox="0 0 10 10" fill="none" stroke="#fff" stroke-width=".95" stroke-linecap="round" stroke-linejoin="round"><path d="M2.4 8.1 5.4 1.9 7.7 8.1 M2.6 6.3 7.9 3.9"/></svg>
<div class="t" style="left:268.5px;top:32.8px;font-size:8.8px;color:#e3e5e8">LoginPage.ets</div>
<svg style="left:330.1px;top:30.0px" width="6.2" height="6.2" viewBox="0 0 16 16" stroke-width="2.3" stroke="#dfe1e4" fill="none" stroke="#cfd1d4" stroke-width="1.4" stroke-linecap="round" stroke-linejoin="round"><path d="M1.5 1.5 14.5 14.5 M14.5 1.5 1.5 14.5"/></svg>
<div class="abs" style="left:248px;top:339.2px;width:618px;height:14px;background-color:#141b32;background-image:repeating-linear-gradient(0deg,transparent 0 1px,#141b32 1px 2px),repeating-linear-gradient(90deg,#242c45 0 1px,transparent 1px 2px)"></div>
<div class="ln" style="left:261.8px;top:48.1px;color:#40444a">229</div>
<div class="code" style="left:362.8px;top:48.1px">}</div>
<div class="ln" style="left:261.8px;top:61.69px;color:#40444a">230</div>
<div class="code" style="left:362.8px;top:61.69px">.<span class="m">borderRadius</span>(<span class="m">$r</span>(<span class="s">&#x27;app.float.button_border_radius&#x27;</span>))</div>
<div class="ln" style="left:261.8px;top:75.28px;color:#40444a">231</div>
<div class="code" style="left:362.8px;top:75.28px">.<span class="m">width</span>(Constants.FULL_SCREEN)</div>
<div class="ln" style="left:261.8px;top:88.87px;color:#40444a">232</div>
<div class="code" style="left:362.8px;top:88.87px">.<span class="m">backgroundColor</span>(<span class="m">$r</span>(<span class="s">&#x27;app.color.color_white&#x27;</span>))</div>
<div class="ln" style="left:261.8px;top:102.46px;color:#40444a">233</div>
<div class="code" style="left:362.8px;top:102.46px">.<span class="m">margin</span>({ top: <span class="m">$r</span>(<span class="s">&#x27;app.float.button_margin_top&#x27;</span>) <span class="s">})</span></div>
<div class="ln" style="left:261.8px;top:116.05px;color:#40444a">234</div>
<div class="code" style="left:362.8px;top:116.05px">.<span class="m">height</span>(<span class="m">$r</span>(<span class="s">&#x27;app.float.button_height&#x27;</span>))</div>
<div class="ln" style="left:261.8px;top:129.64px;color:#40444a">235</div>
<div class="code" style="left:362.8px;top:129.64px">.<span class="m">onClick</span>(() <span class="o">=&gt;</span> {</div>
<div class="ln" style="left:261.8px;top:143.23px;color:#40444a">236</div>
<div class="code" style="left:373.24px;top:143.23px"><span class="k">this</span>.userAccount = <span class="k">new</span> <span class="p">UserAccount</span>();</div>
<div class="ln" style="left:261.8px;top:156.82px;color:#40444a">237</div>
<div class="code" style="left:373.24px;top:156.82px"><span class="k">this</span>.userAccount.userType = UserTypeEnum.HMOS;</div>
<div class="ln" style="left:261.8px;top:170.41px;color:#40444a">238</div>
<div class="code" style="left:373.24px;top:170.41px"><span class="k">this</span>.userAccount.password = <span class="k">this</span>.password;</div>
<div class="ln" style="left:261.8px;top:184.0px;color:#40444a">239</div>
<div class="code" style="left:373.24px;top:184.0px"><span class="k">this</span>.userAccount.username = <span class="k">this</span>.username</div>
<div class="ln" style="left:261.8px;top:197.59px;color:#40444a">240</div>
<div class="code" style="left:373.24px;top:197.59px"><span class="k">this</span>.<span class="m">login</span>();</div>
<div class="ln" style="left:261.8px;top:211.18px;color:#40444a">241</div>
<div class="code" style="left:362.8px;top:211.18px">})</div>
<div class="ln" style="left:261.8px;top:224.77px;color:#40444a">242</div>
<div class="ln" style="left:261.8px;top:238.36px;color:#40444a">243</div>
<div class="code" style="left:362.8px;top:238.36px"><span class="c">Button</span>() {</div>
<div class="ln" style="left:261.8px;top:251.95px;color:#40444a">244</div>
<div class="code" style="left:373.24px;top:251.95px"><span class="c">Row</span>() {</div>
<div class="ln" style="left:261.8px;top:265.54px;color:#40444a">245</div>
<div class="code" style="left:383.68px;top:265.54px"><span class="c">Image</span>(<span class="m">$r</span>(<span class="s">&#x27;app.media.ic_hw_white&#x27;</span>))</div>
<div class="ln" style="left:261.8px;top:279.13px;color:#40444a">246</div>
<div class="code" style="left:394.12px;top:279.13px">.<span class="m">width</span>(<span class="m">$r</span>(<span class="s">&#x27;app.float.normal_icon_size&#x27;</span>))</div>
<div class="ln" style="left:261.8px;top:292.72px;color:#40444a">247</div>
<div class="code" style="left:394.12px;top:292.72px">.<span class="m">height</span>(<span class="m">$r</span>(<span class="s">&#x27;app.float.normal_icon_size&#x27;</span>))</div>
<div class="ln" style="left:261.8px;top:306.31px;color:#40444a">248</div>
<div class="code" style="left:394.12px;top:306.31px">.<span class="m">margin</span>({ right: <span class="m">$r</span>(<span class="s">&#x27;app.float.sm_padding_margin&#x27;</span>) })</div>
<div class="ln" style="left:261.8px;top:319.9px;color:#40444a">249</div>
<div class="code" style="left:383.68px;top:319.9px"><span class="c">Text</span>((<span class="k">this</span>.isSigning <span class="o">&amp;&amp;</span> <span class="k">this</span>.userAccount.userType <span class="e">===</span> UserTypeEnum.HUAWEI) <span class="o">?</span></div>
<div class="ln" style="left:261.8px;top:333.49px;color:#40444a">250</div>
<div class="code" style="left:383.68px;top:333.49px"><span class="k">this</span>.signingContent <span class="o">:</span> <span class="m">$r</span>(<span class="s">&#x27;app.string.hw_button&#x27;</span>))</div>
<div class="ln" style="left:261.8px;top:347.08px;color:#dfe1e4">251</div>
<div class="ln" style="left:261.8px;top:360.67px;color:#40444a">252</div>
<div class="code" style="left:373.24px;top:360.67px">}</div>
<div class="ln" style="left:261.8px;top:374.26px;color:#40444a">253</div>
<div class="code" style="left:362.8px;top:374.26px">}</div>
<div class="ln" style="left:261.8px;top:387.85px;color:#40444a">254</div>
<div class="code" style="left:362.8px;top:387.85px">.<span class="m">borderRadius</span>(<span class="m">$r</span>(<span class="s">&#x27;app.float.button_border_radius&#x27;</span>))</div>
<div class="ln" style="left:261.8px;top:401.44px;color:#40444a">255</div>
<div class="code" style="left:362.8px;top:401.44px">.<span class="m">width</span>(Constants.FULL_SCREEN)</div>
<div class="ln" style="left:261.8px;top:415.03px;color:#40444a">256</div>
<div class="code" style="left:362.8px;top:415.03px">.<span class="m">backgroundColor</span>(<span class="m">$r</span>(<span class="s">&#x27;sys.color.ohos_id_color_emph</span>asize&#x27;))</div>
<div class="ln" style="left:261.8px;top:428.62px;color:#40444a">257</div>
<div class="code" style="left:362.8px;top:428.62px">.<span class="m">heigh</span>t($r(&#x27;app.float.button_<span class="m">height</span>&#x27;))</div>
<div class="ln" style="left:261.8px;top:442.21px;color:#40444a">258</div>
<div class="code" style="left:362.8px;top:442.21px">.<span class="m">margin</span><span class="s">({ top: </span><span class="m">$r</span>(<span class="s">&#x27;app.float.md_padding_margin&#x27;</span><span class="s">) })</span></div>
<div class="ln" style="left:261.8px;top:455.8px;color:#40444a">259</div>
<div class="code" style="left:362.8px;top:455.8px">.<span class="m">onClick</span>(() <span class="s">=&gt;</span><span class="o"> {</span></div>
<div class="ln" style="left:261.8px;top:469.39px;color:#40444a">260</div>
<div class="code" style="left:373.24px;top:469.39px"><span class="m">this</span>.getHWA<span class="m">uthorization();</span></div>
<div class="ln" style="left:261.8px;top:482.98px;color:#40444a">261</div>
<div class="code" style="left:362.8px;top:482.98px"><span class="m">})</span></div>
<div class="ln" style="left:261.8px;top:496.57px;color:#40444a">262</div>
<div class="ln" style="left:261.8px;top:510.16px;color:#40444a">263</div>
<div class="code" style="left:362.8px;top:510.16px">B<span class="m">lank</span>()</div>
<svg style="left:401.4px;top:341.3px" width="6" height="14.5" viewBox="0 0 6 14.5" fill="none" stroke-linecap="round"><path d="M.8 1h1.2q1 0 1 1v10.5q0 1-1 1H.8 M5.2 1H4q-1 0-1 1 M5.2 13.5H4q-1 0-1-1" stroke="#22252a" stroke-width="2.2"/><path d="M.8 1h1.2q1 0 1 1v10.5q0 1-1 1H.8 M5.2 1H4q-1 0-1 1 M5.2 13.5H4q-1 0-1-1" stroke="#f0f0f0" stroke-width="1.1"/></svg>
<div class="abs" style="left:860.5px;top:98.7px;width:4px;height:1.4px;border-radius:.7px;background:#3b73e0"></div>
<div class="abs" style="left:860.5px;top:105.8px;width:4px;height:1.4px;border-radius:.7px;background:#3b73e0"></div>
<div class="abs" style="left:860.5px;top:111.7px;width:4px;height:1.4px;border-radius:.7px;background:#3b73e0"></div>
<div class="abs" style="left:860.5px;top:141.4px;width:4px;height:1.4px;border-radius:.7px;background:#3b73e0"></div>
<div class="abs" style="left:860.5px;top:152.8px;width:4px;height:1.4px;border-radius:.7px;background:#3b73e0"></div>
<div class="abs" style="left:860.5px;top:169.9px;width:4px;height:1.4px;border-radius:.7px;background:#3b73e0"></div>
<div class="abs" style="left:860.5px;top:179.6px;width:4px;height:1.4px;border-radius:.7px;background:#3b73e0"></div>
<div class="abs" style="left:860.5px;top:209.4px;width:4px;height:1.4px;border-radius:.7px;background:#3b73e0"></div>
<div class="abs" style="left:860.5px;top:256.3px;width:4px;height:1.4px;border-radius:.7px;background:#3b73e0"></div>
<div class="abs" style="left:860.5px;top:363.3px;width:3.2px;height:48.5px;border-radius:1.6px;background:#3a3d41"></div>
<svg style="left:873.8px;top:29.6px" width="9.2" height="9.2" viewBox="0 0 10 10"><defs><radialGradient id="rg" cx=".65" cy=".45" r=".75"><stop offset="0" stop-color="#ffffff"/><stop offset=".6" stop-color="#f1f2f4"/><stop offset="1" stop-color="#8d9096"/></radialGradient></defs><circle cx="5" cy="5" r="4.9" fill="url(#rg)"/><text x="6" y="7.4" font-size="5.8" font-family="Liberation Sans,sans-serif" font-style="italic" font-weight="700" fill="#2a2c30" text-anchor="middle">G</text></svg>
<svg style="left:873.0px;top:49.6px" width="11" height="11" viewBox="0 0 16 16" stroke-width="1.3" fill="none" stroke="#cfd1d4" stroke-width="1.4" stroke-linecap="round" stroke-linejoin="round"><path d="M2.5 12V4.5a1.5 1.5 0 0 1 1.5-1.5h8.5"/><path d="M4.5 14h1.5 M4.5 14V2.5a1 1 0 0 1 1-1h7.5a1 1 0 0 1 1 1v3" stroke-width="1.2"/><circle cx="10" cy="9.5" r="3.2"/><path d="M12.4 12 14.8 14.6"/></svg>
<svg style="left:872.9px;top:71.9px" width="11" height="11" viewBox="0 0 16 16" stroke-width="1.3" fill="none" stroke="#cfd1d4" stroke-width="1.4" stroke-linecap="round" stroke-linejoin="round"><rect x="1.5" y="2.5" width="13" height="9.5" rx="1.8"/><path d="M4 5.5h6.5 M4 8.5h2.5"/><rect x="8.3" y="8.8" width="6.5" height="5.2" rx="1" fill="#202224"/><path d="M2.5 14h4"/></svg>
<svg style="left:254.4px;top:521.5px" width="10.8" height="10.8" viewBox="0 0 16 16" stroke-width="1.35" fill="none" stroke="#cfd1d4" stroke-width="1.4" stroke-linecap="round" stroke-linejoin="round"><circle cx="8" cy="8" r="6.6"/><path d="M8 4.3v4.8 M8 11.5v.3"/></svg>
<svg style="left:276.3px;top:521.8px" width="10.6" height="10.6" viewBox="0 0 16 16" stroke-width="1.35" fill="none" stroke="#cfd1d4" stroke-width="1.4" stroke-linecap="round" stroke-linejoin="round"><path d="M2.8 8.3V4.5a2.4 2.4 0 0 1 2.4-2.4h5.6a2.4 2.4 0 0 1 2.4 2.4V8.3"/><rect x="1.8" y="8.3" width="12.4" height="5.9" rx="1.8"/></svg>
<svg style="left:296.95px;top:520.35px" width="12.5" height="12.5" viewBox="0 0 16 16"  fill="none" stroke="#cfd1d4" stroke-width="1.4" stroke-linecap="round" stroke-linejoin="round"><g stroke-width="1.1"><path d="M5.8 5.2V4.3a2.2 2.4 0 0 1 4.4 0v.9"/><path d="M4.3 13.4V8.8a3.7 3.6 0 0 1 7.4 0v4.6"/><path d="M2.2 13.5h11.6 M4.4 7.5 2.6 6.1 M11.6 7.5 13.4 6.1 M4.3 10.4H2 M11.7 10.4H14"/><path d="M8 9v3" stroke-opacity=".6"/></g></svg>
<svg style="left:318.75px;top:520.35px" width="12.5" height="12.5" viewBox="0 0 16 16"  fill="none" stroke="#cfd1d4" stroke-width="1.4" stroke-linecap="round" stroke-linejoin="round"><g stroke-width="1.1"><path d="M5.8 5.2V4.3a2.2 2.4 0 0 1 4.4 0v.9"/><path d="M4.3 13.4V8.8a3.7 3.6 0 0 1 7.4 0v4.6"/><path d="M2.2 13.5h11.6 M4.4 7.5 2.6 6.1 M11.6 7.5 13.4 6.1 M4.3 10.4H2 M11.7 10.4H14"/><path d="M8 9v3" stroke-opacity=".6"/></g><rect x="9.5" y="9.8" width="5.5" height="4.8" rx=".8" fill="#cfd1d4" stroke="#202224" stroke-width=".8"/></svg>
<svg style="left:341.6px;top:521.4px" width="10.8" height="10.8" viewBox="0 0 16 16" stroke-width="1.35" fill="none" stroke="#cfd1d4" stroke-width="1.4" stroke-linecap="round" stroke-linejoin="round"><rect x="1.3" y="2.2" width="13.4" height="11.6" rx="3"/><path d="M4.5 5.8 7 8 4.5 10.2 M8.3 10.6h3.4"/></svg>
<svg style="left:363.0px;top:521.4px" width="10.6" height="10.6" viewBox="0 0 16 16" stroke-width="1.25" fill="none" stroke="#cfd1d4" stroke-width="1.4" stroke-linecap="round" stroke-linejoin="round"><path d="M14 8.5V12a2 2 0 0 1-2 2H4a2 2 0 0 1-2-2V5a2 2 0 0 1 2-2h8 M5 1.5v2.8 M10.5 1.5v2.8 M5 7h2.5 M6.5 11.3l.7-2.5 5.5-5.3 1.7 1.7-5.5 5.3z"/></svg>
<svg style="left:384.8px;top:521.1px" width="11" height="11" viewBox="0 0 16 16" stroke-width="1.3" fill="none" stroke="#cfd1d4" stroke-width="1.4" stroke-linecap="round" stroke-linejoin="round"><circle cx="6.8" cy="6.6" r="5"/><path d="M10.5 10.3 14.6 14.4 M4.3 7.8 6 6 7.6 7.4 9.3 5.5"/></svg>
<svg style="left:255.8px;top:542.6px" width="10.6" height="10.6" viewBox="0 0 16 16" stroke-width="1.15" fill="none" stroke="#cfd1d4" stroke-width="1.4" stroke-linecap="round" stroke-linejoin="round"><path d="M1.5 4.4a1.7 1.7 0 0 1 1.7-1.7h2.8q.7 0 1.1.6l.9 1.3H12.8a1.7 1.7 0 0 1 1.7 1.7v5.3a1.7 1.7 0 0 1-1.7 1.7H3.2a1.7 1.7 0 0 1-1.7-1.7z"/></svg>
<div class="t" style="left:268.7px;top:548.3px;font-size:7.9px;color:#a9acb1">features</div>
<svg style="left:309.8px;top:542.6px" width="10.6" height="10.6" viewBox="0 0 16 16" stroke-width="1.15" fill="none" stroke="#cfd1d4" stroke-width="1.4" stroke-linecap="round" stroke-linejoin="round"><path d="M1.5 4.4a1.7 1.7 0 0 1 1.7-1.7h2.8q.7 0 1.1.6l.9 1.3H12.8a1.7 1.7 0 0 1 1.7 1.7v5.3a1.7 1.7 0 0 1-1.7 1.7H3.2a1.7 1.7 0 0 1-1.7-1.7z"/></svg>
<div class="t" style="left:322.3px;top:548.3px;font-size:7.9px;color:#a9acb1">login</div>
<svg style="left:352.3px;top:542.6px" width="10.6" height="10.6" viewBox="0 0 16 16" stroke-width="1.15" fill="none" stroke="#cfd1d4" stroke-width="1.4" stroke-linecap="round" stroke-linejoin="round"><path d="M1.5 4.4a1.7 1.7 0 0 1 1.7-1.7h2.8q.7 0 1.1.6l.9 1.3H12.8a1.7 1.7 0 0 1 1.7 1.7v5.3a1.7 1.7 0 0 1-1.7 1.7H3.2a1.7 1.7 0 0 1-1.7-1.7z"/></svg>
<div class="t" style="left:364.8px;top:548.3px;font-size:7.9px;color:#a9acb1">src</div>
<svg style="left:387.3px;top:542.6px" width="10.6" height="10.6" viewBox="0 0 16 16" stroke-width="1.15" fill="none" stroke="#cfd1d4" stroke-width="1.4" stroke-linecap="round" stroke-linejoin="round"><path d="M1.5 4.4a1.7 1.7 0 0 1 1.7-1.7h2.8q.7 0 1.1.6l.9 1.3H12.8a1.7 1.7 0 0 1 1.7 1.7v5.3a1.7 1.7 0 0 1-1.7 1.7H3.2a1.7 1.7 0 0 1-1.7-1.7z"/></svg>
<div class="t" style="left:399.8px;top:548.3px;font-size:7.9px;color:#a9acb1">main</div>
<svg style="left:429.8px;top:542.6px" width="10.6" height="10.6" viewBox="0 0 16 16" stroke-width="1.15" fill="none" stroke="#cfd1d4" stroke-width="1.4" stroke-linecap="round" stroke-linejoin="round"><path d="M1.5 4.4a1.7 1.7 0 0 1 1.7-1.7h2.8q.7 0 1.1.6l.9 1.3H12.8a1.7 1.7 0 0 1 1.7 1.7v5.3a1.7 1.7 0 0 1-1.7 1.7H3.2a1.7 1.7 0 0 1-1.7-1.7z"/></svg>
<div class="t" style="left:442.3px;top:548.3px;font-size:7.9px;color:#a9acb1">ets</div>
<svg style="left:465.8px;top:542.6px" width="10.6" height="10.6" viewBox="0 0 16 16" stroke-width="1.15" fill="none" stroke="#cfd1d4" stroke-width="1.4" stroke-linecap="round" stroke-linejoin="round"><path d="M1.5 4.4a1.7 1.7 0 0 1 1.7-1.7h2.8q.7 0 1.1.6l.9 1.3H12.8a1.7 1.7 0 0 1 1.7 1.7v5.3a1.7 1.7 0 0 1-1.7 1.7H3.2a1.7 1.7 0 0 1-1.7-1.7z"/></svg>
<div class="t" style="left:478.8px;top:548.3px;font-size:7.9px;color:#a9acb1">pages</div>
<div class="abs" style="left:510.85px;top:543.25px;width:8.9px;height:8.9px;border-radius:1.6px;background:#2257d8"></div><svg style="left:510.85px;top:543.25px" width="8.9" height="8.9" viewBox="0 0 10 10" fill="none" stroke="#fff" stroke-width=".95" stroke-linecap="round" stroke-linejoin="round"><path d="M2.4 8.1 5.4 1.9 7.7 8.1 M2.6 6.3 7.9 3.9"/></svg>
<div class="t" style="left:524.5px;top:548.3px;font-size:7.9px;color:#a9acb1">LoginPage.ets</div>
<svg style="left:302.9px;top:546.2px" width="2.2" height="4.4" viewBox="0 0 2.2 4.4"><path d="M0 0 L2.2 2.2 L0 4.4" fill="none" stroke="#6c7076" stroke-width="0.9" stroke-linecap="round" stroke-linejoin="round"/></svg>
<svg style="left:345.9px;top:546.2px" width="2.2" height="4.4" viewBox="0 0 2.2 4.4"><path d="M0 0 L2.2 2.2 L0 4.4" fill="none" stroke="#6c7076" stroke-width="0.9" stroke-linecap="round" stroke-linejoin="round"/></svg>
<svg style="left:380.9px;top:546.2px" width="2.2" height="4.4" viewBox="0 0 2.2 4.4"><path d="M0 0 L2.2 2.2 L0 4.4" fill="none" stroke="#6c7076" stroke-width="0.9" stroke-linecap="round" stroke-linejoin="round"/></svg>
<svg style="left:423.4px;top:546.2px" width="2.2" height="4.4" viewBox="0 0 2.2 4.4"><path d="M0 0 L2.2 2.2 L0 4.4" fill="none" stroke="#6c7076" stroke-width="0.9" stroke-linecap="round" stroke-linejoin="round"/></svg>
<svg style="left:459.4px;top:546.2px" width="2.2" height="4.4" viewBox="0 0 2.2 4.4"><path d="M0 0 L2.2 2.2 L0 4.4" fill="none" stroke="#6c7076" stroke-width="0.9" stroke-linecap="round" stroke-linejoin="round"/></svg>
<svg style="left:505.4px;top:546.2px" width="2.2" height="4.4" viewBox="0 0 2.2 4.4"><path d="M0 0 L2.2 2.2 L0 4.4" fill="none" stroke="#6c7076" stroke-width="0.9" stroke-linecap="round" stroke-linejoin="round"/></svg>
<div class="t" style="left:806px;top:548.0px;font-size:8.9px;color:#d9dbde;-webkit-text-stroke:0">251:19  LF</div>
<div class="abs" style="left:0;top:-20px;right:0;bottom:0;border:1px solid #121416;border-radius:19.5px"></div>
</div></body></html>
